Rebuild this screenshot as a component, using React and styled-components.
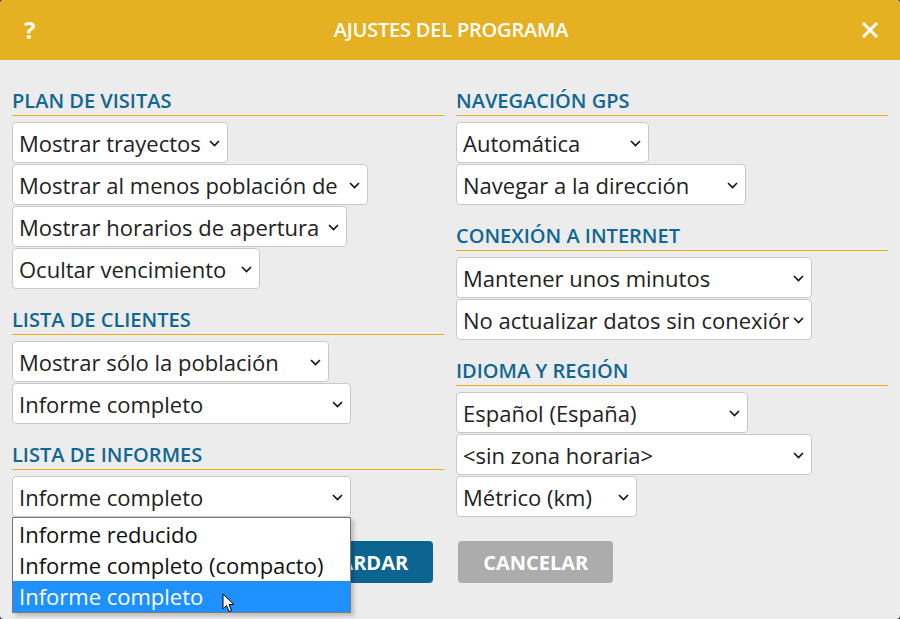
import React from 'react';
import styled, { createGlobalStyle } from 'styled-components';

const GlobalStyle = createGlobalStyle`
  html, body {
    margin: 0;
    padding: 0;
    background: #3a3a3a;
  }
  body {
    font-family: "Open Sans", "Liberation Sans", sans-serif;
  }
`;

const Dialog = styled.div`
  width: 900px;
  height: 619px;
  background: #ececec;
  border-radius: 4px;
  overflow: hidden;
  display: flex;
  flex-direction: column;
`;

const Header = styled.div`
  height: 60px;
  flex: 0 0 60px;
  background: #e5b021;
  display: flex;
  align-items: center;
  justify-content: space-between;
  padding: 0 22px 0 24px;
  color: #fff;
`;

const HelpMark = styled.span`
  font-size: 24px;
  font-weight: 700;
  line-height: 1;
  width: 16px;
`;

const Title = styled.h1`
  margin: 0;
  font-size: 20px;
  font-weight: 600;
  letter-spacing: -0.2px;
  line-height: 1;
`;

const CloseIcon = styled.svg`
  width: 16px;
  height: 16px;
  display: block;
`;

const Body = styled.div`
  padding: 29px 12px 0;
  display: flex;
  flex-direction: column;
`;

const Columns = styled.div`
  display: grid;
  grid-template-columns: 432px 432px;
  column-gap: 12px;
  align-items: start;
`;

const Column = styled.div`
  display: flex;
  flex-direction: column;
  gap: 19px;
`;

const Section = styled.section`
  display: flex;
  flex-direction: column;
`;

const Heading = styled.h2`
  margin: 0 0 6px;
  padding-bottom: 2px;
  font-size: 20px;
  font-weight: 600;
  line-height: 24px;
  color: #0f6792;
  border-bottom: 1px solid #e5b021;
`;

const Fields = styled.div`
  display: flex;
  flex-direction: column;
  align-items: flex-start;
  gap: 1px;
`;

const SelectWrap = styled.div`
  position: relative;
  width: ${(p) => p.$w}px;
  height: 41px;
`;

const Select = styled.select`
  appearance: none;
  -webkit-appearance: none;
  width: 100%;
  height: 100%;
  box-sizing: border-box;
  border: 1px solid #c9c9c9;
  border-radius: 4px;
  background: #fff;
  font-family: "Open Sans", "Liberation Sans", sans-serif;
  font-size: 22px;
  color: #222;
  padding: 0 22px 0 6px;
  outline: none;
  white-space: nowrap;
  overflow: hidden;
`;

const Chevron = styled.svg`
  position: absolute;
  right: 8px;
  top: 18px;
  width: 11px;
  height: 7px;
  pointer-events: none;
`;

const OptionList = styled.ul`
  position: absolute;
  left: 0;
  top: 41px;
  width: 100%;
  box-sizing: border-box;
  margin: 0;
  padding: 1px 0 0;
  list-style: none;
  background: #fff;
  border: 1px solid #7a7a7a;
  box-shadow: 3px 3px 4px rgba(0, 0, 0, 0.2);
  z-index: 5;
`;

const OptionItem = styled.li`
  height: 31px;
  line-height: 31px;
  padding: 0 6px;
  font-size: 22px;
  color: ${(p) => (p.$active ? '#fff' : '#111')};
  background: ${(p) => (p.$active ? '#1e90ff' : 'transparent')};
  position: relative;
`;

const Pointer = styled.svg`
  position: absolute;
  left: 209px;
  top: 12px;
  width: 13px;
  height: 20px;
`;

const ButtonRow = styled.div`
  display: flex;
  justify-content: center;
  gap: 25px;
  padding-right: 2px;
  margin-top: 24px;
`;

const Button = styled.button`
  height: 42px;
  padding: 0 25px;
  border: none;
  border-radius: 4px;
  font-family: "Open Sans", "Liberation Sans", sans-serif;
  font-size: 20px;
  font-weight: 700;
  color: #fff;
  background: ${(p) => (p.$primary ? '#0b6590' : '#acacac')};
`;

const ChevronIcon = () => (
  <Chevron viewBox="0 0 11 7">
    <polyline points="1,1 5.5,5.5 10,1" fill="none" stroke="#111" strokeWidth="1.6" />
  </Chevron>
);

const Dropdown = ({ value, width, open, options }) => (
  <SelectWrap $w={width}>
    <Select defaultValue={value}>
      <option>{value}</option>
    </Select>
    <ChevronIcon />
    {open && (
      <OptionList>
        {options.map((o, i) => (
          <OptionItem key={o} $active={i === options.length - 1}>
            {o}
            {i === options.length - 1 && (
              <Pointer viewBox="0 0 13 20">
                <path
                  d="M1 1 L1 16 L4.5 12.5 L7 18.5 L9.5 17.5 L7 11.5 L12 11.5 Z"
                  fill="#fff"
                  stroke="#000"
                  strokeWidth="1"
                  strokeLinejoin="round"
                />
              </Pointer>
            )}
          </OptionItem>
        ))}
      </OptionList>
    )}
  </SelectWrap>
);

const left = [
  {
    title: 'PLAN DE VISITAS',
    fields: [
      ['Mostrar trayectos', 216],
      ['Mostrar al menos población de', 356],
      ['Mostrar horarios de apertura', 335],
      ['Ocultar vencimiento', 248],
    ],
  },
  {
    title: 'LISTA DE CLIENTES',
    fields: [
      ['Mostrar sólo la población', 317],
      ['Informe completo', 339],
    ],
  },
  {
    title: 'LISTA DE INFORMES',
    fields: [['Informe completo', 339, true]],
  },
];

const right = [
  {
    title: 'NAVEGACIÓN GPS',
    fields: [
      ['Automática', 193],
      ['Navegar a la dirección', 290],
    ],
  },
  {
    title: 'CONEXIÓN A INTERNET',
    fields: [
      ['Mantener unos minutos', 356],
      ['No actualizar datos sin conexión', 356],
    ],
  },
  {
    title: 'IDIOMA Y REGIÓN',
    fields: [
      ['Español (España)', 292],
      ['<sin zona horaria>', 356],
      ['Métrico (km)', 181],
    ],
  },
];

const reportOptions = ['Informe reducido', 'Informe completo (compacto)', 'Informe completo'];

const renderColumn = (sections) => (
  <Column>
    {sections.map((s) => (
      <Section key={s.title}>
        <Heading>{s.title}</Heading>
        <Fields>
          {s.fields.map(([v, w, open], i) => (
            <Dropdown key={i} value={v} width={w} open={open} options={reportOptions} />
          ))}
        </Fields>
      </Section>
    ))}
  </Column>
);

export default function App() {
  return (
    <>
      <GlobalStyle />
      <Dialog>
        <Header>
          <HelpMark>?</HelpMark>
          <Title>AJUSTES DEL PROGRAMA</Title>
          <CloseIcon viewBox="0 0 16 16">
            <path d="M2 2 L14 14 M14 2 L2 14" stroke="#fff" strokeWidth="3" strokeLinecap="square" />
          </CloseIcon>
        </Header>
        <Body>
          <Columns>
            {renderColumn(left)}
            {renderColumn(right)}
          </Columns>
          <ButtonRow>
            <Button $primary>GUARDAR</Button>
            <Button>CANCELAR</Button>
          </ButtonRow>
        </Body>
      </Dialog>
    </>
  );
}
